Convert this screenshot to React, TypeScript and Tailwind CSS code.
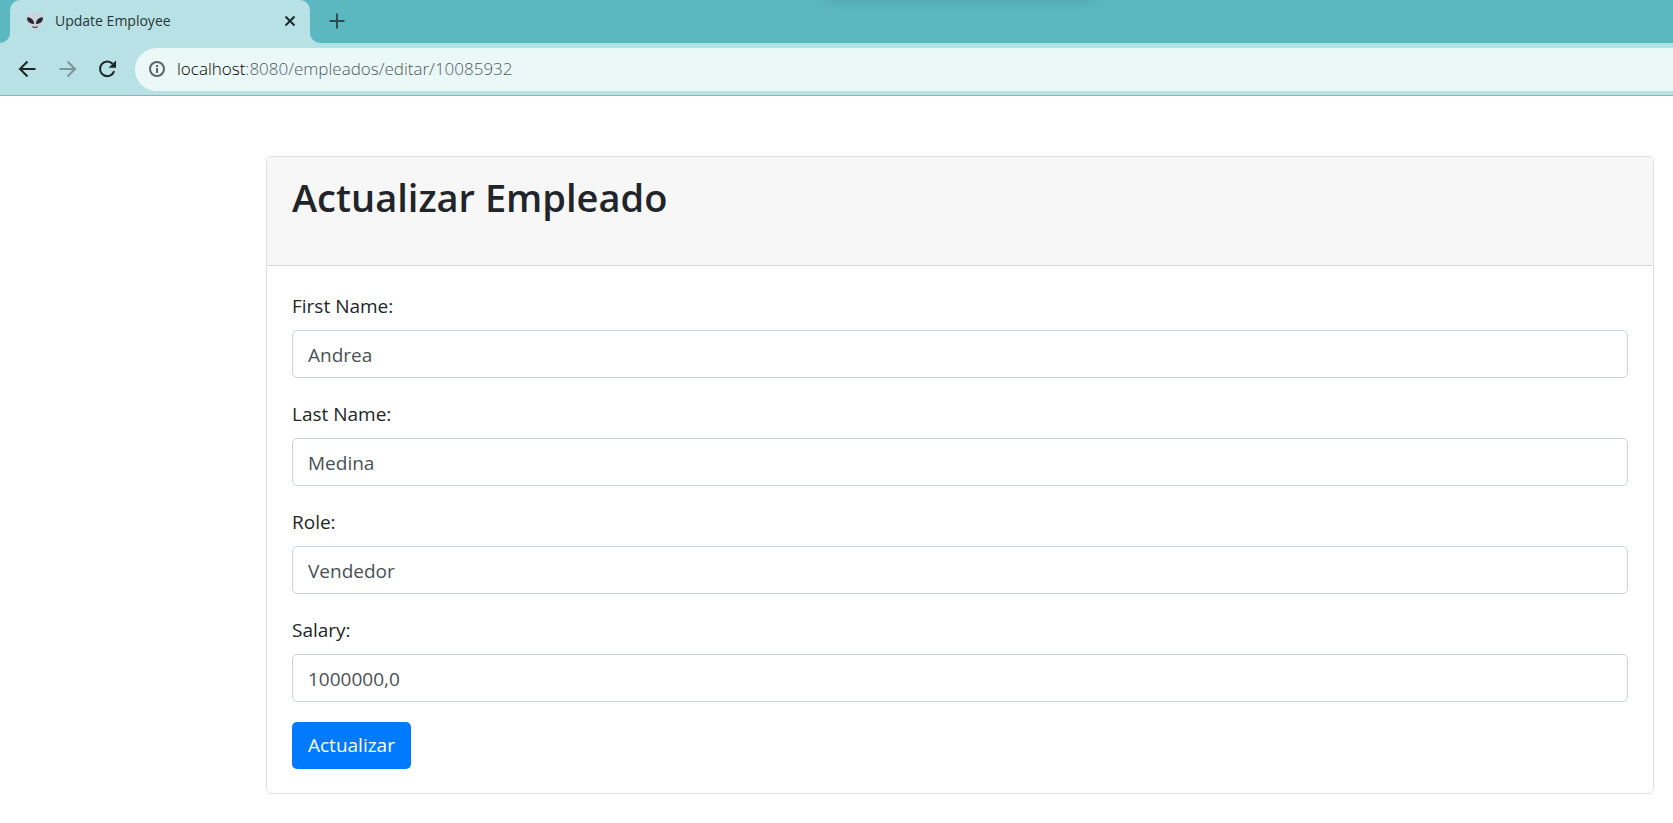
import { useState } from "react";

const fields = [
  { id: "firstName", label: "First Name:", value: "Andrea" },
  { id: "lastName", label: "Last Name:", value: "Medina" },
  { id: "role", label: "Role:", value: "Vendedor" },
  { id: "salary", label: "Salary:", value: "1000000,0" },
];

function AlienIcon() {
  return (
    <svg className="size-5 shrink-0" viewBox="0 0 20 20" aria-hidden="true">
      <path d="M10 1C14.8 1 18.8 4.3 18.8 8.6C18.8 13.5 13.6 19 10 19C6.4 19 1.2 13.5 1.2 8.6C1.2 4.3 5.2 1 10 1Z" fill="#cdd3dc" />
      <path d="M2 6.6C5.2 5.8 8.8 8.2 9.2 12.8C5.2 13.4 2 11 2 6.6Z" fill="#24292d" />
      <path d="M18 6.6C14.8 5.8 11.2 8.2 10.8 12.8C14.8 13.4 18 11 18 6.6Z" fill="#24292d" />
      <path d="M7.8 15.8Q10 17.2 12.2 15.8" fill="none" stroke="#30363a" strokeWidth="1.2" strokeLinecap="round" />
    </svg>
  );
}

function TabStrip() {
  return (
    <div className="relative flex h-[43px] overflow-hidden bg-[#5bb8c1]">
      <div className="absolute -top-10 left-[825px] h-10 w-[270px] shadow-[0_0_16px_rgba(0,0,0,0.12)]" />
      <div className="flex w-[10px] bg-[#b7e1e4]">
        <div className="w-full rounded-br-[10px] bg-[#5bb8c1]" />
      </div>
      <div className="flex w-[300px] items-center rounded-t-[10px] bg-[#b7e1e4] pr-[10px] pb-px pl-[15px]">
        <AlienIcon />
        <span className="ml-[10px] flex-1 truncate text-sm text-[#27363a]">Update Employee</span>
        <button type="button" aria-label="Close tab" className="flex size-5 items-center justify-center">
          <svg className="size-[10px]" viewBox="0 0 10 10" stroke="#1c2b2e" strokeWidth="2">
            <path d="M0.5 0.5L9.5 9.5M9.5 0.5L0.5 9.5" />
          </svg>
        </button>
      </div>
      <div className="flex flex-1 bg-[#b7e1e4]">
        <div className="flex flex-1 items-center rounded-bl-[10px] bg-[#5bb8c1] pb-px pl-[17px]">
          <button type="button" aria-label="New tab" className="flex size-5 items-center justify-center">
            <svg className="size-4" viewBox="0 0 16 16" stroke="#2b4c50" strokeWidth="2">
              <path d="M8 0.5V15.5M0.5 8H15.5" />
            </svg>
          </button>
        </div>
      </div>
    </div>
  );
}

function Toolbar() {
  return (
    <div className="flex h-[53px] items-center border-b border-[#8fb3b6] bg-[#b7e1e4] pl-[17px]">
      <button type="button" aria-label="Back" className="flex size-5 items-center justify-center">
        <svg className="size-5" viewBox="0 0 20 20" fill="none" stroke="#1c2628" strokeWidth="2">
          <path d="M18.5 10H3.5M10.5 2.5L3 10L10.5 17.5" />
        </svg>
      </button>
      <button type="button" aria-label="Forward" disabled className="ml-5 flex size-5 items-center justify-center">
        <svg className="size-5" viewBox="0 0 20 20" fill="none" stroke="#7b979a" strokeWidth="2">
          <path d="M2.5 10H17.5M10.5 2.5L18 10L10.5 17.5" />
        </svg>
      </button>
      <button type="button" aria-label="Reload" className="ml-5 flex size-5 items-center justify-center">
        <svg className="size-5" viewBox="0 0 20 20" fill="none">
          <path d="M15.6 4.8A7.3 7.3 0 1 0 17.2 12.2" stroke="#1c2628" strokeWidth="2" />
          <path d="M19 1.4V8.8H11.6Z" fill="#1c2628" />
        </svg>
      </button>
      <div className="ml-[18px] flex h-[43px] flex-1 items-center rounded-l-full bg-[#ebf8f8] pl-[14px]">
        <svg className="size-4 shrink-0" viewBox="0 0 16 16" fill="none" stroke="#5a6466" strokeWidth="2">
          <circle cx="8" cy="8" r="7" />
          <path d="M8 7V12M8 4V6" />
        </svg>
        <div className="ml-3 text-[17px] font-light whitespace-nowrap text-[#4d595d]">
          <span className="text-black">localhost</span>:8080/empleados/editar/10085932
        </div>
      </div>
    </div>
  );
}

function EmployeeForm() {
  const [values, setValues] = useState<Record<string, string>>(
    Object.fromEntries(fields.map((f) => [f.id, f.value])),
  );

  return (
    <main className="pt-[60px] pr-[19px] pb-7 pl-[266px]">
      <section className="rounded-[5px] border border-[#dfdfdf] bg-white">
        <header className="h-[109px] rounded-t-[4px] border-b border-[#d8d8d8] bg-[#f7f7f7] px-[25px] pt-[15px]">
          <h1 className="text-[38px] leading-[50px] font-semibold text-[#212529]">Actualizar Empleado</h1>
        </header>
        <form className="px-[25px] pt-6 pb-6" onSubmit={(e) => e.preventDefault()}>
          {fields.map((f) => (
            <div key={f.id} className="mb-5">
              <label htmlFor={f.id} className="mb-2 block text-[19px] leading-8 text-[#212529]">
                {f.label}
              </label>
              <input
                id={f.id}
                type="text"
                value={values[f.id]}
                onChange={(e) => setValues({ ...values, [f.id]: e.target.value })}
                className="block h-12 w-full rounded-[5px] border border-[#ced4da] bg-white px-[15px] pt-0.5 text-[19px] text-[#495057]"
              />
            </div>
          ))}
          <button type="submit" className="block h-[47px] rounded-[5px] bg-[#007bff] px-4 text-[19px] text-white">
            Actualizar
          </button>
        </form>
      </section>
    </main>
  );
}

export default function App() {
  return (
    <div className="min-h-screen bg-white font-['Open_Sans','Noto_Sans',sans-serif]">
      <TabStrip />
      <Toolbar />
      <EmployeeForm />
    </div>
  );
}
